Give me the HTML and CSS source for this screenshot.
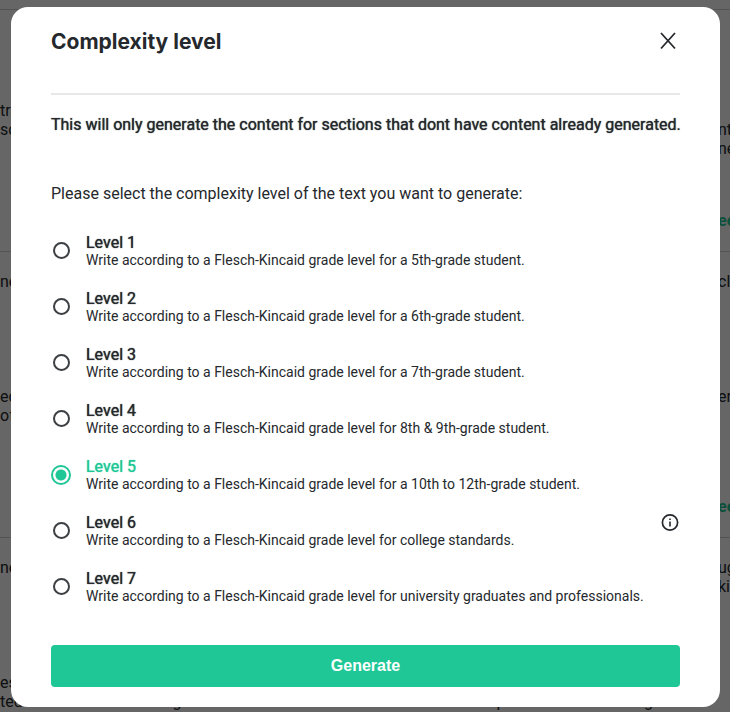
FILE: index.html
```
<!DOCTYPE html>
<html lang="en">
<head>
  <meta charset="UTF-8" />
  <meta name="viewport" content="width=device-width, initial-scale=1.0" />
  <title>Complexity level</title>
  <link rel="stylesheet" href="styles.css">
</head>
<body>
  <!-- Page behind the dialog -->
  <div class="page" aria-hidden="true">
    <div class="row row-first">
      <div class="cell">
        <p class="text">tra<br>sc</p>
      </div>
      <div class="cell cell-right">
        <p class="text"><br>nt<br>ne</p>
        <p class="more">ee</p>
      </div>
    </div>
    <div class="row">
      <div class="cell">
        <p class="title">ne</p>
        <p class="text">ed<br>of</p>
      </div>
      <div class="cell cell-right">
        <p class="title">cla</p>
        <p class="text">er</p>
        <p class="more">ee</p>
      </div>
    </div>
    <div class="row row-last">
      <div class="cell">
        <p class="title">ne</p>
        <p class="text">es<br>ted without data.</p>
      </div>
      <div class="cell">
        <p class="title"></p>
        <p class="text"><br>along such and other mechanics of</p>
      </div>
      <div class="cell">
        <p class="title"></p>
        <p class="text"><br>compounds found in foreground</p>
      </div>
      <div class="cell cell-right">
        <p class="title">ug<br>kin</p>
      </div>
    </div>
  </div>

  <div class="overlay">
    <form class="modal" id="levelForm" role="dialog" aria-labelledby="modalTitle">
      <header class="modal-header">
        <h1 id="modalTitle">Complexity level</h1>
        <button type="button" class="close" aria-label="Close">
          <svg width="18" height="18" viewBox="0 0 18 18" fill="none" stroke="#25282c" stroke-width="1.8">
            <path d="M2 1 16 16.5M16 1 2 16.5" />
          </svg>
        </button>
      </header>

      <p class="notice">This will only generate the content for sections that dont have content already generated.</p>
      <p class="prompt">Please select the complexity level of the text you want to generate:</p>

      <div class="levels">
        <label class="level">
          <input type="radio" name="level" value="1" />
          <span class="level-text"><strong>Level 1</strong>Write according to a Flesch-Kincaid grade level for a 5th-grade student.</span>
        </label>
        <label class="level">
          <input type="radio" name="level" value="2" />
          <span class="level-text"><strong>Level 2</strong>Write according to a Flesch-Kincaid grade level for a 6th-grade student.</span>
        </label>
        <label class="level">
          <input type="radio" name="level" value="3" />
          <span class="level-text"><strong>Level 3</strong>Write according to a Flesch-Kincaid grade level for a 7th-grade student.</span>
        </label>
        <label class="level">
          <input type="radio" name="level" value="4" />
          <span class="level-text"><strong>Level 4</strong>Write according to a Flesch-Kincaid grade level for 8th &amp; 9th-grade student.</span>
        </label>
        <label class="level">
          <input type="radio" name="level" value="5" checked />
          <span class="level-text"><strong>Level 5</strong>Write according to a Flesch-Kincaid grade level for a 10th to 12th-grade student.</span>
        </label>
        <div class="level-row">
          <label class="level">
            <input type="radio" name="level" value="6" />
            <span class="level-text"><strong>Level 6</strong>Write according to a Flesch-Kincaid grade level for college standards.</span>
          </label>
          <button type="button" class="info" aria-label="More information">
            <svg width="20" height="20" viewBox="0 0 20 20" fill="none" stroke="#25282c">
              <circle cx="10" cy="9.5" r="7.6" stroke-width="1.7" />
              <path d="M10 8.5v5M10 5.5v1.6" stroke-width="1.6" />
            </svg>
          </button>
        </div>
        <label class="level">
          <input type="radio" name="level" value="7" />
          <span class="level-text"><strong>Level 7</strong>Write according to a Flesch-Kincaid grade level for university graduates and professionals.</span>
        </label>
      </div>

      <button type="submit" class="generate">Generate</button>
    </form>
  </div>

  <script>
    document.getElementById("levelForm").addEventListener("submit", function(e) {
      e.preventDefault();
    });
  </script>
</body>
</html>
```
FILE: styles.css
```
* {
  box-sizing: border-box;
}

body {
  margin: 0;
  background-color: #fff;
  color: #25282c;
  font-family: Roboto, sans-serif;
  font-size: 16px;
}

h1, p {
  margin: 0;
}

button {
  border: none;
  cursor: pointer;
}

.page {
  height: 100vh;
  padding-top: 9px;
  overflow: hidden;
  line-height: 19px;
  white-space: nowrap;
}

.row {
  display: flex;
  justify-content: space-between;
  height: 286px;
  padding-top: 20px;
  border-top: 1px solid #d0d0d0;
}

.row-first {
  height: 242px;
  padding-top: 91px;
}

.row-last {
  display: grid;
  grid-template-columns: 142px 323px 1fr 12px;
}

.cell-right {
  width: 12px;
}

.title {
  height: 115px;
}

.text {
  height: 110px;
}

.more {
  color: #1fc796;
  font-weight: bold;
}

.overlay {
  position: fixed;
  inset: 0;
  padding: 7px 10px 0 11px;
  background-color: rgba(0, 0, 0, 0.6);
}

.modal {
  padding: 20px 40px;
  border-radius: 17px;
  background-color: #fff;
}

.modal-header {
  display: flex;
  justify-content: space-between;
  align-items: flex-start;
  padding-bottom: 36px;
  border-bottom: 2px solid #e8e8e8;
}

.modal-header h1 {
  font-family: Inter, sans-serif;
  font-size: 21px;
  font-weight: 700;
  line-height: 30px;
}

.close, .info {
  display: flex;
  padding: 0;
  background: none;
}

.close {
  margin: 5px 3px 0 0;
}

.notice {
  margin-top: 20px;
  line-height: 20px;
}

/* thickened regular weight */
.notice, .level strong {
  font-weight: 400;
  text-shadow: 0 0 1px currentColor;
}

.prompt {
  margin: 49px 0 29px;
  line-height: 20px;
}

.levels {
  display: flex;
  flex-direction: column;
  gap: 20px;
}

.level {
  display: flex;
  align-items: center;
  gap: 15px;
  cursor: pointer;
}

.level-row {
  display: flex;
  justify-content: space-between;
  align-items: flex-start;
}

.level input {
  appearance: none;
  flex: none;
  width: 17px;
  height: 17px;
  margin: 0 1px 2px 2px;
  border: 2px solid #3c3f43;
  border-radius: 50%;
}

.level input:checked {
  width: 20px;
  height: 20px;
  margin: 0;
  border-color: #1fc796;
  background: radial-gradient(circle, #1fc796 5px, #fff 6px);
}

.level-text {
  font-size: 14px;
  line-height: 17px;
}

.level strong {
  display: block;
  font-size: 16px;
  line-height: 19px;
}

.level input:checked + .level-text strong {
  color: #1fc796;
}

.generate {
  width: 100%;
  height: 42px;
  margin-top: 40px;
  border-radius: 4px;
  background-color: #1fc796;
  color: #fff;
  font-family: "Liberation Sans", Arial, sans-serif;
  font-size: 16px;
  font-weight: bold;
}

@media (min-width: 720px) {
  .notice {
    white-space: nowrap;
  }
}
```
